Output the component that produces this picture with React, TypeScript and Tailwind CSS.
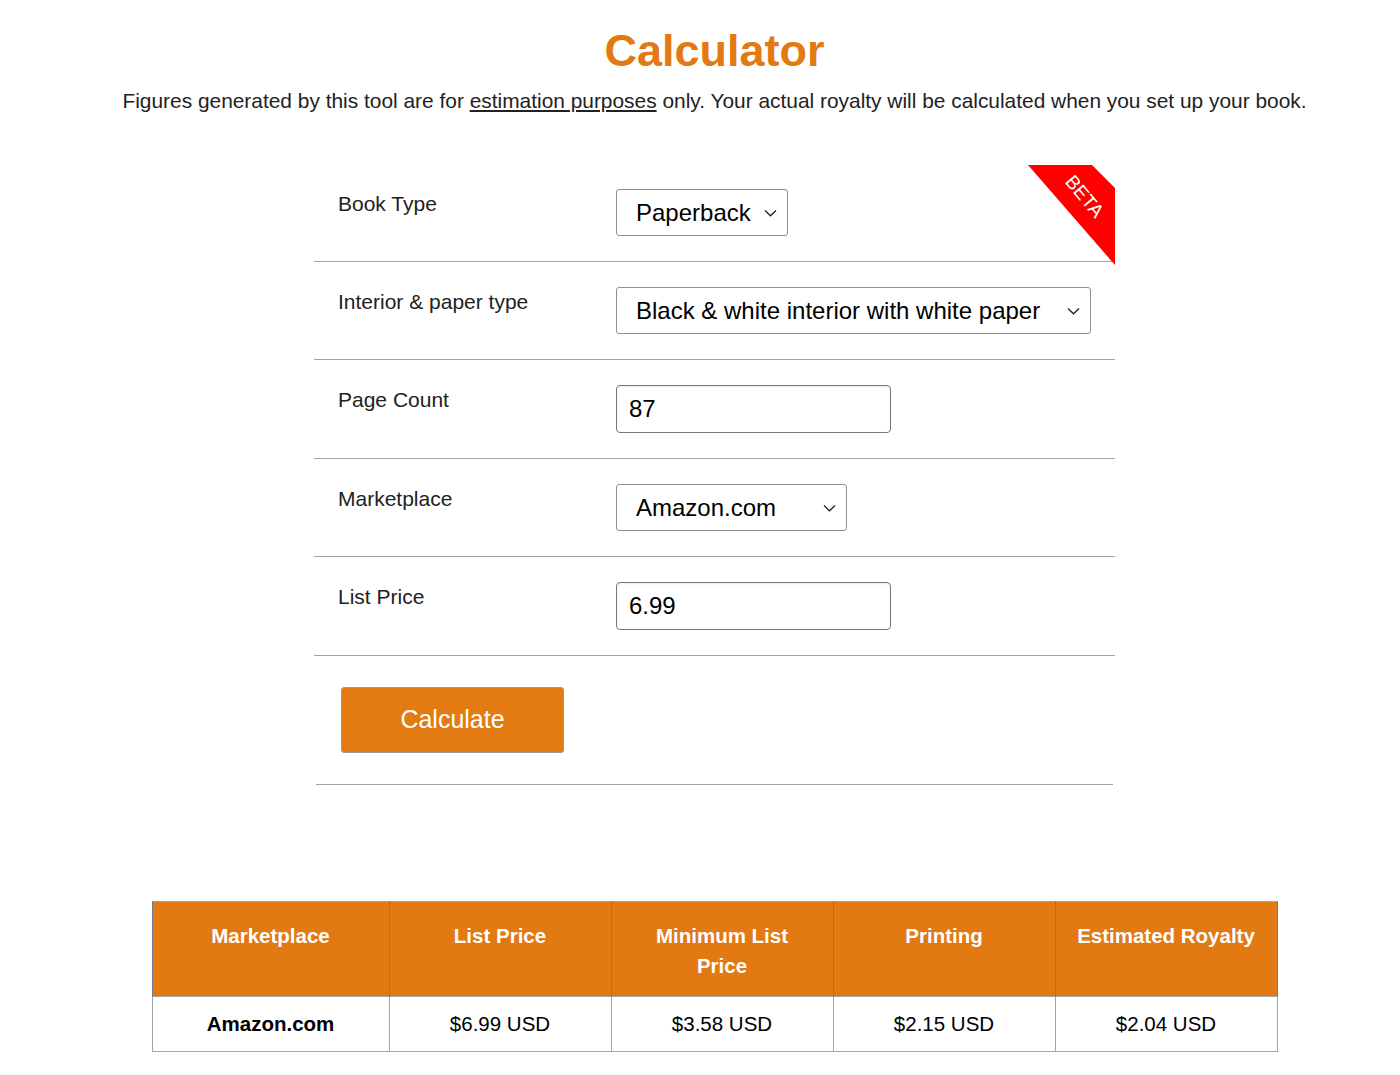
import React from "react";

const ORANGE = "#e27912";

function Chevron() {
  return (
    <svg
      className="pointer-events-none absolute right-[11px] top-1/2 -translate-y-1/2"
      width="13"
      height="8"
      viewBox="0 0 13 8"
    >
      <polyline points="1,1.5 6.5,6.8 12,1.5" fill="none" stroke="#222" strokeWidth="1.3" />
    </svg>
  );
}

function FakeSelect({ value, width }: { value: string; width: string }) {
  return (
    <div className={`relative ${width}`}>
      <select
        defaultValue={value}
        className="h-[47px] w-full appearance-none rounded-[3px] border border-[#8f8f8f] bg-white pl-[19px] pr-8 text-[24px] text-black outline-none"
        style={{ fontFamily: "'Liberation Sans', Arial, sans-serif" }}
      >
        <option>{value}</option>
      </select>
      <Chevron />
    </div>
  );
}

function FakeInput({ value }: { value: string }) {
  return (
    <input
      defaultValue={value}
      className="h-[48px] w-[275px] rounded-[4px] border border-[#777] bg-white px-3 text-[24px] text-black shadow-[inset_0_1px_2px_rgba(0,0,0,0.08)] outline-none"
      style={{ fontFamily: "'Liberation Sans', Arial, sans-serif" }}
    />
  );
}

function FormRow({ label, children }: { label: string; children: React.ReactNode }) {
  return (
    <div className="flex border-b border-[#a3a3a3] pb-[25px] pt-[25px]">
      <div className="w-[302px] pl-6 pt-[3px] text-[21px] leading-[24px] text-[#222]">{label}</div>
      {children}
    </div>
  );
}

function BetaRibbon() {
  return (
    <svg className="absolute right-0 top-[1px]" width="87" height="100" viewBox="0 0 87 100">
      <polygon points="0,0 64,0 87,23 87,100" fill="#ff0000" />
      <text
        x="57"
        y="38"
        fill="#fff"
        fontSize="19"
        textAnchor="middle"
        transform="rotate(50 57 31)"
        style={{ fontFamily: "'Liberation Sans', Arial, sans-serif" }}
      >
        BETA
      </text>
    </svg>
  );
}

const headers = ["Marketplace", "List Price", "Minimum List Price", "Printing", "Estimated Royalty"];
const values = ["Amazon.com", "$6.99 USD", "$3.58 USD", "$2.15 USD", "$2.04 USD"];
const widths = ["w-[237px]", "w-[222px]", "w-[222px]", "w-[222px]", "w-[222px]"];

export default function App() {
  return (
    <div
      className="min-h-[1075px] bg-white pl-[29px] text-black"
      style={{ fontFamily: "'Liberation Sans', Arial, sans-serif" }}
    >
      <div className="flex flex-col items-center">
        {/* heading */}
        <h1 className="mt-[28px] text-[45px] font-bold leading-none" style={{ color: ORANGE }}>
          Calculator
        </h1>
        <p className="mt-[14px] text-[20.9px] leading-[28px] text-[#222]">
          Figures generated by this tool are for <span className="underline">estimation purposes</span> only. Your
          actual royalty will be calculated when you set up your book.
        </p>

        {/* form */}
        <div className="relative mt-[49px] w-[801px]">
          <BetaRibbon />
          <FormRow label="Book Type">
            <FakeSelect value="Paperback" width="w-[172px]" />
          </FormRow>
          <FormRow label="Interior & paper type">
            <FakeSelect value="Black & white interior with white paper" width="w-[475px]" />
          </FormRow>
          <FormRow label="Page Count">
            <FakeInput value="87" />
          </FormRow>
          <FormRow label="Marketplace">
            <FakeSelect value="Amazon.com" width="w-[231px]" />
          </FormRow>
          <FormRow label="List Price">
            <FakeInput value="6.99" />
          </FormRow>
          <div className="mx-[2px] border-b border-[#a3a3a3] pb-[31px] pl-[25px] pt-[31px]">
            <button
              className="h-[66px] w-[223px] rounded-[3px] border border-[#9a9a9a] text-[25px] text-white"
              style={{ backgroundColor: "#e47b12" }}
            >
              Calculate
            </button>
          </div>
        </div>

        {/* results */}
        <table className="mt-[116px] table-fixed border-collapse border border-[#a6a6a6]">
          <thead>
            <tr>
              {headers.map((h, i) => (
                <th
                  key={h}
                  className={`${widths[i]} h-[95px] border-x border-[#6f7f8c] px-3 pb-[15px] pt-[19px] align-top text-[20.5px] font-bold leading-[30px] text-white`}
                  style={{ backgroundColor: ORANGE }}
                >
                  {h === "Minimum List Price" ? (
                    <>
                      Minimum List
                      <br />
                      Price
                    </>
                  ) : (
                    h
                  )}
                </th>
              ))}
            </tr>
          </thead>
          <tbody>
            <tr>
              {values.map((v, i) => (
                <td
                  key={i}
                  className={`h-[55px] border border-[#a6a6a6] text-center text-[20.5px] leading-[30px] ${
                    i === 0 ? "font-bold" : ""
                  }`}
                >
                  {v}
                </td>
              ))}
            </tr>
          </tbody>
        </table>
      </div>
    </div>
  );
}
